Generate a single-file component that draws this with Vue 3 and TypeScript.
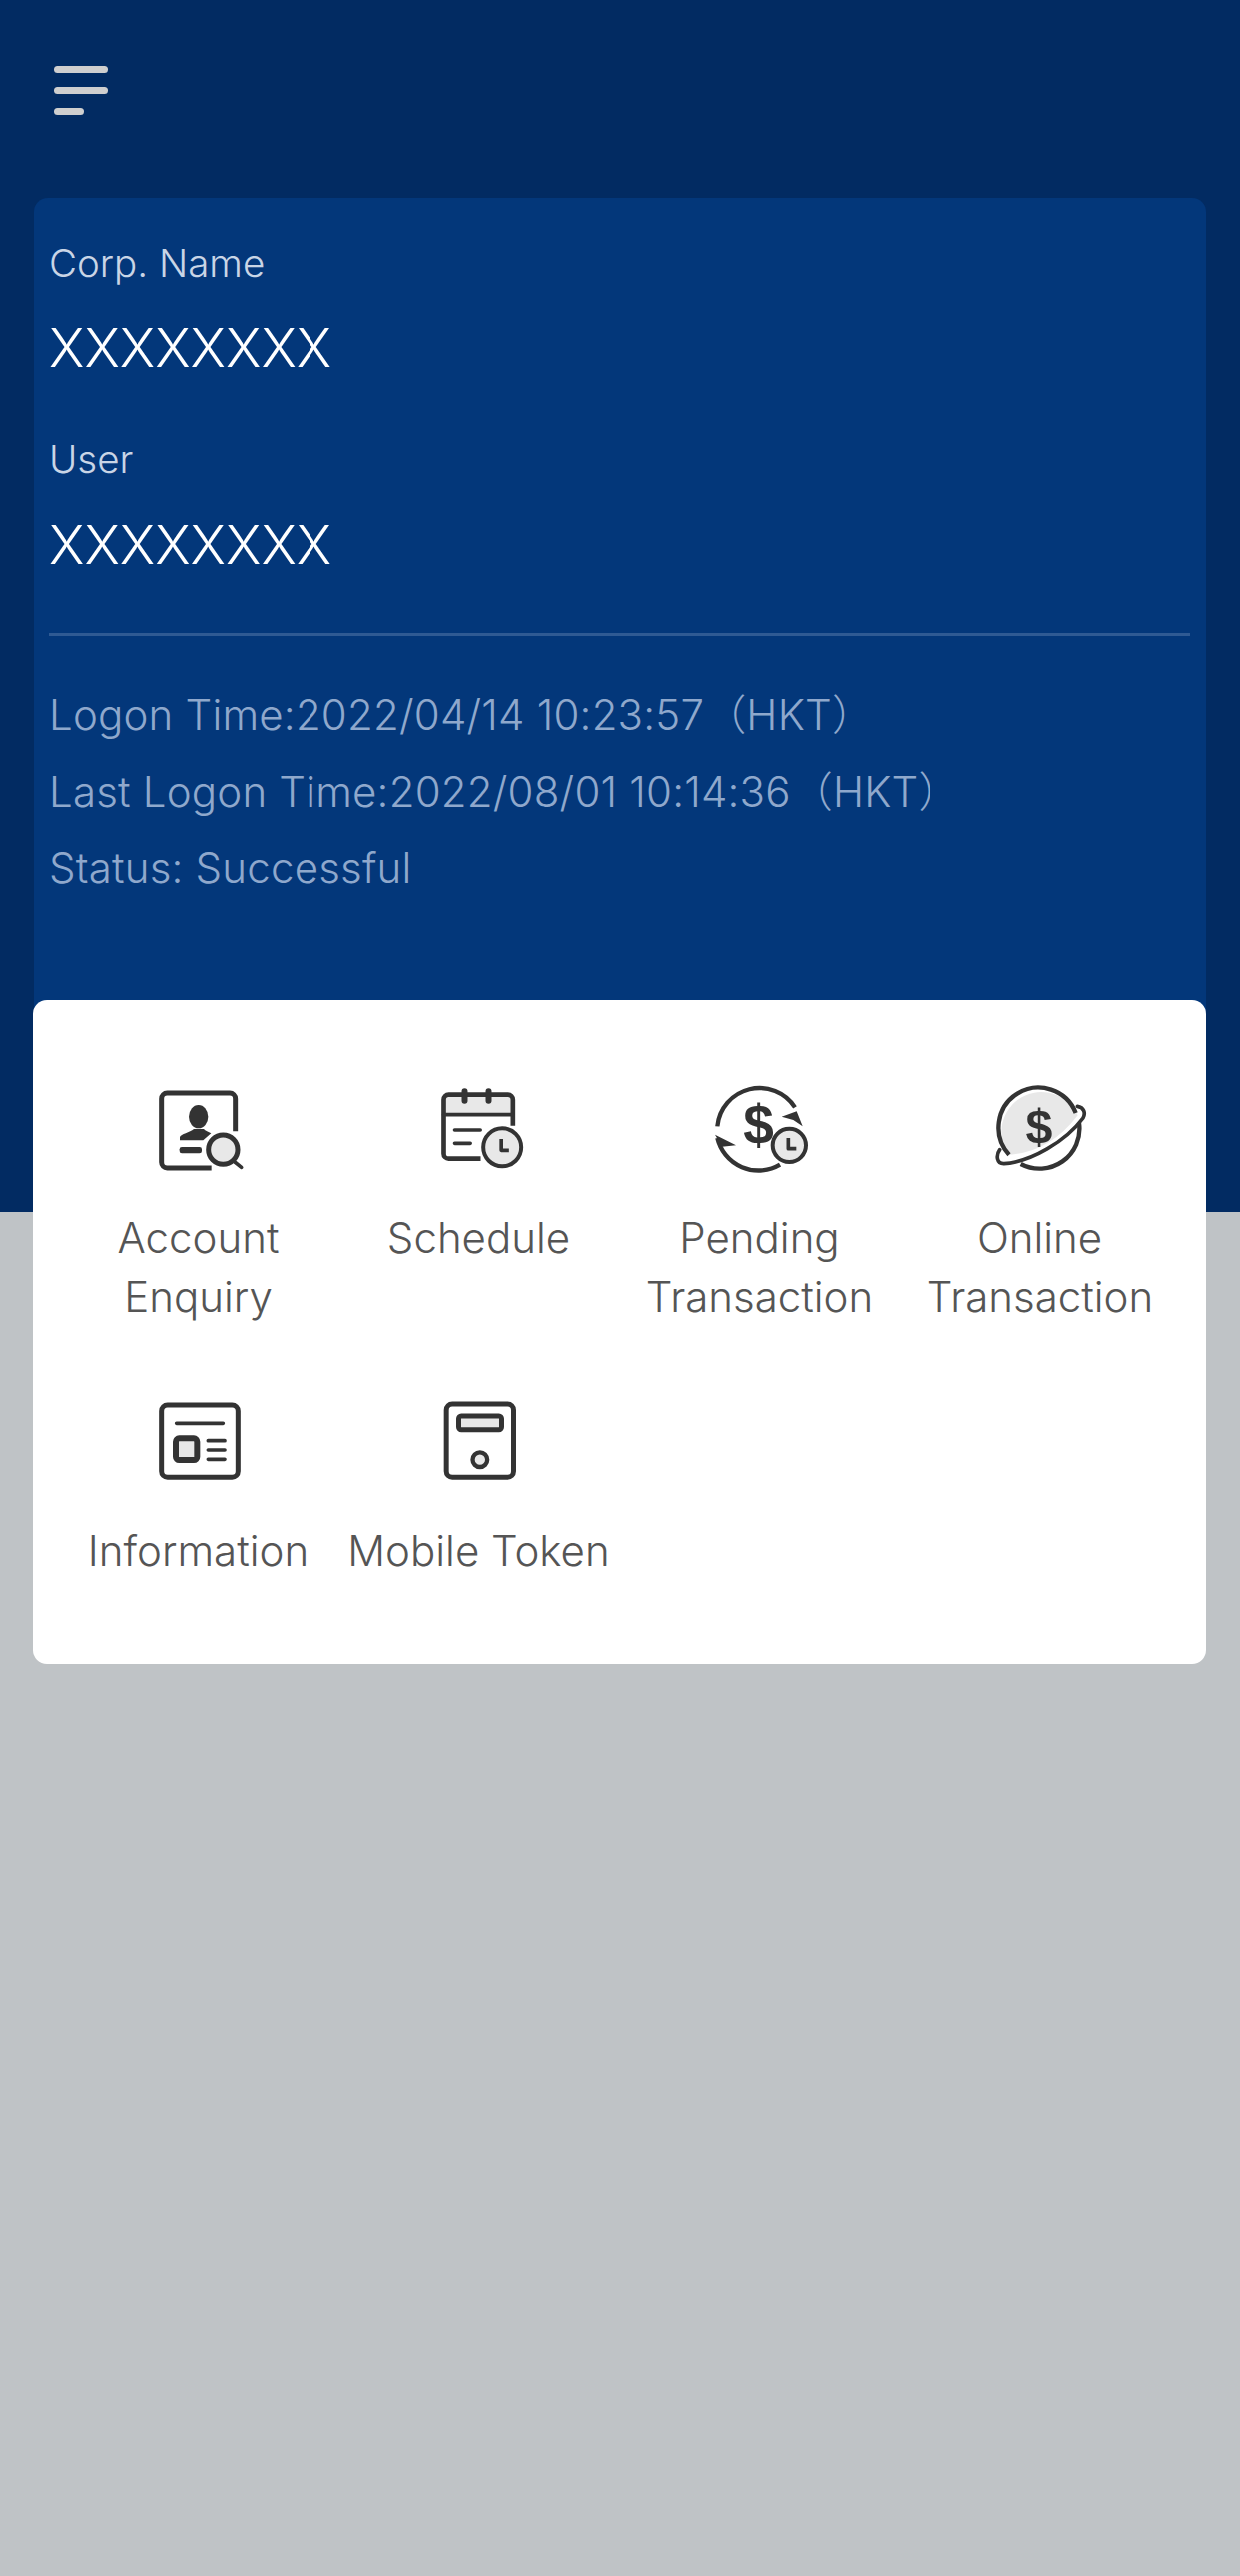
<script setup lang="ts">
const infoLines: string[] = [
  'Logon Time:2022/04/14 10:23:57（HKT）',
  'Last Logon Time:2022/08/01 10:14:36（HKT）',
  'Status: Successful',
]
</script>

<template>
  <div class="page">
    <section class="hero">
      <div class="topbar">
        <button class="menu" aria-label="Menu"><i></i><i></i><i class="short"></i></button>
      </div>
      <div class="info">
        <div class="label">Corp. Name</div>
        <div class="value">XXXXXXXX</div>
        <div class="label second">User</div>
        <div class="value">XXXXXXXX</div>
        <hr class="rule" />
        <div class="logs">
          <div v-for="line in infoLines" :key="line">{{ line }}</div>
        </div>
      </div>
    </section>

    <section class="panel">
      <div class="item">
        <svg class="icon" viewBox="-33 0 540 450">
          <path class="s15" d="M347 220V122a17 17 0 0 0-17-17H142a17 17 0 0 0-17 17V313a17 17 0 0 0 17 17H275" />
          <ellipse class="dark" cx="236" cy="176" rx="29" ry="35" />
          <path class="dark" d="M180 247v-10c3-9 30-13 42-24h30c4 6 14 8 22 13l-24 21z" />
          <rect class="dark" x="179" y="267" width="67" height="19" rx="7" />
          <circle class="halo" cx="310" cy="275" r="44" />
          <path class="s11r" d="M345 312l20 16" />
        </svg>
        <div class="name">Account<br />Enquiry</div>
      </div>

      <div class="item">
        <svg class="icon" viewBox="-31.5 0 540 450">
          <path class="tint" d="M132 170V125a15 15 0 0 1 15-15H325a15 15 0 0 1 15 15V170z" />
          <path class="s14" d="M340 203V125a15 15 0 0 0-15-15H147a15 15 0 0 0-15 15V287a15 15 0 0 0 15 15H243" />
          <path class="s11r" d="M132 170H340M165 216H242M165 256H212" />
          <path class="s18" d="M195 100V128M267 100V128" />
          <circle class="halo12" cx="308" cy="268" r="57" />
          <path class="s11" d="M305 243V277H328" />
        </svg>
        <div class="name">Schedule</div>
      </div>

      <div class="item">
        <svg class="icon" viewBox="-30 0 540 450">
          <path class="s13" d="M112 205A127 127 0 0 1 345 148M112 240A127 127 0 0 0 300 320" />
          <path class="dark" d="M305 176L350 160L368 205L340 186zM105 230L168 262L126 266z" />
          <text class="dollar" x="236" y="258" text-anchor="middle">$</text>
          <circle class="halo12" cx="328" cy="262" r="50" />
          <path class="s11" d="M325 240V272H349" />
        </svg>
        <div class="name">Pending<br />Transaction</div>
      </div>

      <div class="item">
        <svg class="icon" viewBox="-27 0 540 450">
          <path class="tint" d="M148 290A120 120 0 1 1 356 172Q270 285 148 290z" />
          <path class="s13" d="M150 290A120 120 0 1 1 350 165M360 195A120 120 0 0 1 185 318" />
          <path class="s11r" d="M122 275C110 292 112 318 135 317C215 312 320 250 372 180C380 165 375 148 355 145" />
          <text class="dollar small" x="240" y="255" text-anchor="middle">$</text>
        </svg>
        <div class="name">Online<br />Transaction</div>
      </div>

      <div class="item">
        <svg class="icon" viewBox="-33 -21 540 450">
          <rect class="s15" x="125" y="81" width="230" height="217" rx="18" />
          <path class="s11r" d="M170 136H310M265 188H315M265 216H315M265 244H315" />
          <rect class="box18" x="168" y="181" width="64" height="65" rx="10" />
        </svg>
        <div class="name">Information</div>
      </div>

      <div class="item">
        <svg class="icon" viewBox="-31.5 -21 540 450">
          <rect class="s15" x="140" y="78" width="202" height="220" rx="18" />
          <rect class="box15" x="177" y="114" width="129" height="41" rx="8" />
          <circle class="box13" cx="241" cy="245" r="22" />
        </svg>
        <div class="name">Mobile Token</div>
      </div>
    </section>
  </div>
</template>

<style>
html, body { margin: 0; background: #bfc3c6; }
</style>

<style scoped>
.page {
  width: 1242px;
  height: 2580px;
  background: #bfc3c6;
  font-family: Inter, "Noto Sans CJK SC", sans-serif;
  overflow: hidden;
}
.hero {
  height: 1214px;
  padding: 0 34px;
  box-sizing: border-box;
  background: #022b62;
  overflow: hidden;
}
.topbar {
  height: 198px;
  padding-top: 66px;
  box-sizing: border-box;
}
.menu {
  display: flex;
  flex-direction: column;
  gap: 14px;
  width: 54px;
  margin-left: 20px;
  padding: 0;
  border: 0;
  background: none;
}
.menu i {
  display: block;
  width: 54px;
  height: 7px;
  border-radius: 4px;
  background: #cfcfcf;
}
.menu i.short { width: 30px; }
.info {
  height: 1100px;
  padding: 35px 16px 0 15px;
  box-sizing: border-box;
  background: #03377a;
  border-radius: 14px 14px 0 0;
}
.label {
  height: 60px;
  line-height: 60px;
  font-size: 38.5px;
  font-weight: 300;
  color: #c9d5e6;
}
.label.second { margin-top: 25px; }
.value {
  height: 112px;
  line-height: 112px;
  font-size: 53.5px;
  font-weight: 300;
  color: #fff;
}
.rule {
  margin: 32px 0 41px;
  height: 3px;
  border: 0;
  background: #2f5a93;
}
.logs {
  line-height: 76.5px;
  font-size: 42px;
  font-weight: 300;
  letter-spacing: 0.2px;
  color: #8fa8cc;
  white-space: nowrap;
}
.panel {
  position: relative;
  width: 1175px;
  margin: -212px 0 0 33px;
  padding: 58px 25px 85px;
  box-sizing: border-box;
  display: grid;
  grid-template-columns: repeat(4, 281px);
  row-gap: 45px;
  align-items: start;
  background: #fff;
  border-radius: 14px;
}
.item {
  display: flex;
  flex-direction: column;
  align-items: center;
}
.icon {
  display: block;
  width: 180px;
  height: 150px;
  flex: none;
}
.name {
  text-align: center;
  font-size: 42px;
  line-height: 59px;
  font-weight: 300;
  color: #555;
  white-space: nowrap;
}
.icon * { stroke-linecap: butt; stroke-linejoin: round; }
.s11, .s11r, .s13, .s14, .s15, .s18 { fill: none; stroke: #333; }
.s11 { stroke-width: 11; }
.s11r { stroke-width: 11; stroke-linecap: round; }
.s13 { stroke-width: 13; }
.s14 { stroke-width: 14; }
.s15 { stroke-width: 15; }
.s18 { stroke-width: 18; stroke-linecap: round; }
.dark { fill: #333; }
.tint { fill: #e8e8e8; }
.halo { fill: #e8e8e8; stroke: #333; stroke-width: 15; }
.halo12 { fill: #e8e8e8; stroke: #333; stroke-width: 12; }
.box18 { fill: #e8e8e8; stroke: #333; stroke-width: 18; }
.box15 { fill: #e8e8e8; stroke: #333; stroke-width: 15; }
.box13 { fill: #e8e8e8; stroke: #333; stroke-width: 13; }
.dollar {
  font-family: "Liberation Sans", sans-serif;
  font-weight: 700;
  font-size: 165px;
  fill: #333;
}
.dollar.small { font-size: 145px; }
</style>
